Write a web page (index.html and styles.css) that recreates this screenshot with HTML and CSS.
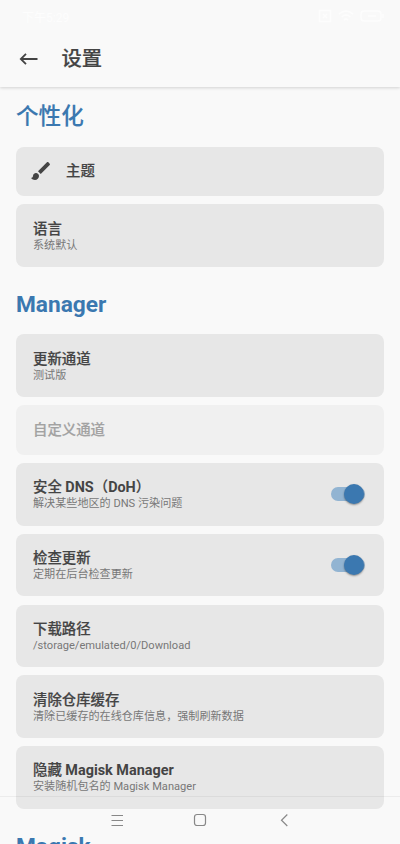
FILE: index.html
```
<!doctype html>
<html lang="zh-CN">
  <head>
    <meta charset="UTF-8" />
    <meta name="viewport" content="width=device-width, initial-scale=1.0" />
    <title>设置</title>
    <link rel="stylesheet" href="styles.css">
  </head>
  <body>
    <div class="screen">
      <header class="app-header">
        <div class="status-bar">
          <span class="clock">下午5:29</span>
          <div class="status-icons">
            <svg width="14" height="14" viewBox="0 0 14 14"><rect x="1.5" y="1.5" width="11" height="11" /><path d="M5 5l4 4M9 5l-4 4" /></svg>
            <svg width="16" height="14" viewBox="0 0 16 14"><path d="M1 5q7-6 14 0M3.500 8q4.500-4 9 0M6 11q2-2 4 0" /></svg>
            <svg width="24" height="14" viewBox="0 0 24 14"><rect x="1" y="2" width="20" height="10" rx="3" /><path d="M8 7h8M23 5v4" /></svg>
          </div>
        </div>
        <div class="toolbar">
          <svg class="back" width="20" height="16" viewBox="0 0 20 16"><path d="M19.500 8H3M8 2.800L2.800 8L8 13.200" /></svg>
          <h1>设置</h1>
        </div>
      </header>

      <main class="content">
        <h2>个性化</h2>
        <div class="card short with-icon">
          <svg class="brush" width="24" height="24" viewBox="0 0 24 24"><path d="M7 14c-1.660 0-3 1.340-3 3 0 1.310-1.160 2-2 2 .92 1.220 2.490 2 4 2 2.210 0 4-1.790 4-4 0-1.660-1.340-3-3-3zm13.710-9.370l-1.340-1.340c-.39-.39-1.020-.39-1.410 0L9 12.250 11.750 15l8.960-8.960c.39-.39.39-1.020 0-1.410z" /></svg>
          <div class="title">主题</div>
        </div>
        <div class="card">
          <div class="text">
            <div class="title">语言</div>
            <div class="desc">系统默认</div>
          </div>
        </div>

        <h2 class="section">Manager</h2>
        <div class="card">
          <div class="text">
            <div class="title">更新通道</div>
            <div class="desc">测试版</div>
          </div>
        </div>
        <div class="card short disabled">
          <div class="title">自定义通道</div>
        </div>
        <div class="card">
          <div class="text">
            <div class="title">安全 <b>DNS</b>（<b>DoH</b>）</div>
            <div class="desc">解决某些地区的 DNS 污染问题</div>
          </div>
          <div class="switch"></div>
        </div>
        <div class="card">
          <div class="text">
            <div class="title">检查更新</div>
            <div class="desc">定期在后台检查更新</div>
          </div>
          <div class="switch"></div>
        </div>
        <div class="card">
          <div class="text">
            <div class="title">下载路径</div>
            <div class="desc">/storage/emulated/0/Download</div>
          </div>
        </div>
        <div class="card">
          <div class="text">
            <div class="title">清除仓库缓存</div>
            <div class="desc">清除已缓存的在线仓库信息，强制刷新数据</div>
          </div>
        </div>
        <div class="card">
          <div class="text">
            <div class="title">隐藏 <b>Magisk Manager</b></div>
            <div class="desc">安装随机包名的 Magisk Manager</div>
          </div>
        </div>

        <h2 class="section">Magisk</h2>
      </main>

      <nav class="nav-bar">
        <svg width="14" height="14" viewBox="0 0 14 14"><path d="M1.500 2.500h11.500M1.500 7.500h11.500M1.500 12.500h11.500" /></svg>
        <svg width="14" height="14" viewBox="0 0 14 14"><rect x="1.500" y="1.500" width="11" height="11" rx="2.500" /></svg>
        <svg width="14" height="14" viewBox="0 0 14 14"><path d="M11.300 1.500L5.500 7.300L11.300 13" /></svg>
      </nav>
    </div>
  </body>
</html>
```

FILE: styles.css
```
* {
  box-sizing: border-box;
}
body {
  margin: 0;
  background: #f9f9f9;
  color: #444;
  font-family: Roboto, 'Noto Sans CJK SC', sans-serif;
}
svg {
  display: block;
  fill: none;
}
.screen {
  position: relative;
  height: 844px;
  overflow: hidden;
}
.app-header {
  height: 87px;
  box-shadow: 0 1px 3px rgba(0, 0, 0, 0.16);
}
.status-bar {
  display: flex;
  justify-content: space-between;
  align-items: center;
  height: 32px;
  padding: 0 16px 0 22px;
  color: #fdfdfd;
  font-size: 12px;
}
.status-icons {
  display: flex;
  gap: 6px;
}
.status-icons svg {
  stroke: #fdfdfd;
  stroke-width: 1.5;
}
.toolbar {
  display: flex;
  align-items: center;
  height: 54px;
  padding-left: 18px;
}
.back {
  stroke: #444;
  stroke-width: 1.8;
}
h1 {
  margin: 0 0 0 23.5px;
  font-size: 20.3px;
  font-weight: 500;
  line-height: 26px;
  -webkit-text-stroke: 0.2px;
}
.content {
  padding: 15px 16px 0;
}
h2 {
  margin: 0 0 14.5px;
  color: #3b78b0;
  font-size: 22.6px;
  font-weight: 500;
  line-height: 30px;
  -webkit-text-stroke: 0.1px;
}
.section {
  margin-top: 23.5px;
  margin-bottom: 14px;
  font-size: 22.7px;
  font-weight: 700;
  -webkit-text-stroke: 0;
}
.card {
  display: flex;
  align-items: center;
  justify-content: space-between;
  height: 62.6px;
  margin-bottom: 8.2px;
  padding: 0 19px 0 17px;
  background: #e7e7e7;
  border-radius: 8px;
}
.short {
  height: 49.6px;
}
.short .title {
  padding-top: 2px;
}
.with-icon {
  justify-content: flex-start;
  gap: 13px;
  padding-left: 13px;
}
.brush {
  fill: #444;
}
.text {
  padding-top: 3px;
}
.title {
  font-size: 14.4px;
  font-weight: 500;
  line-height: 16px;
  -webkit-text-stroke: 0.2px;
}
.title b {
  font-weight: 700;
  -webkit-text-stroke: 0;
}
.desc {
  color: #777;
  font-size: 11.1px;
  line-height: 15px;
}
.disabled {
  background: #f0f0f0;
  color: #a2a2a2;
}
.switch {
  position: relative;
  width: 34px;
  height: 14px;
  border-radius: 7px;
  background: #92b4d2;
}
.switch::after {
  content: '';
  position: absolute;
  top: -3px;
  right: 1px;
  width: 20px;
  height: 20px;
  border-radius: 50%;
  background: #3b78b0;
  box-shadow: 0 1px 2px rgba(0, 0, 0, 0.4);
}
.nav-bar {
  position: absolute;
  left: 0;
  right: 0;
  bottom: 0;
  display: flex;
  justify-content: center;
  gap: 69px;
  height: 48px;
  padding-top: 16px;
  border-top: 1px solid rgba(0, 0, 0, 0.05);
}
.nav-bar svg {
  stroke: #888;
  stroke-width: 1.2;
}
```
